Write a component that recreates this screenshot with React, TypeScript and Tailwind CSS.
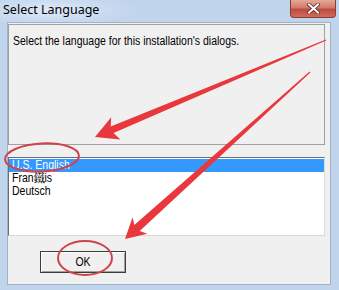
import React from "react";

const ui = "font-['Liberation_Sans',Arial,sans-serif]";

const languages = ["U.S. English", "Fran鐵is", "Deutsch"];

function CloseButton() {
  return (
    <div className="mr-[3px] flex h-[18px] w-[46px] items-center justify-center rounded-b-[4px] border border-t-0 border-[#8a3d34] bg-[linear-gradient(180deg,#e4a898_0%,#d27a6b_45%,#c04a3d_55%,#d26b5c_100%)]">
      <svg width="13" height="11" viewBox="0 0 13 11">
        <path d="M2 1.5 L11 9.5 M11 1.5 L2 9.5" stroke="#5b2a24" strokeWidth="3.6" strokeLinecap="square" />
        <path d="M2 1.5 L11 9.5 M11 1.5 L2 9.5" stroke="#ffffff" strokeWidth="2" strokeLinecap="square" />
      </svg>
    </div>
  );
}

function Annotations() {
  return (
    <svg className="pointer-events-none absolute inset-0" width="339" height="290" viewBox="0 0 339 290">
      <polygon
        fill="#e8383d"
        points="325.8,39.4 326.2,40.6 113.5,133 120.4,139.4 95,137 111.2,117.2 110.7,126.6"
      />
      <polygon
        fill="#e8383d"
        points="309.6,71.6 310.4,72.4 139.7,231.1 147.4,233.7 125,239 132.6,217.3 134.3,225.1"
      />
      <ellipse cx="42" cy="157.5" rx="37" ry="14" fill="none" stroke="#cf4448" strokeWidth="2" transform="rotate(-3 42 157.5)" />
      <ellipse cx="85" cy="258" rx="27" ry="17" fill="none" stroke="#cf4448" strokeWidth="2" />
    </svg>
  );
}

export default function App() {
  return (
    <div className="relative h-[290px] w-[339px] overflow-hidden bg-[#c0d4ec]">
      {/* title bar */}
      <div className="flex h-[22px] items-start justify-between bg-[radial-gradient(ellipse_90px_16px_at_50px_10px,#dfe9f6_0%,#cadcf1_60%,#c0d4ec_100%)]">
        <span className="pl-[3px] pt-[2px] font-['Noto_Sans',sans-serif] text-[12.5px] leading-[16px] text-black">
          Select Language
        </span>
        <CloseButton />
      </div>

      {/* client area */}
      <div className={`ml-[7px] mr-[8px] flex h-[263px] flex-col border border-[#9fb2ca] bg-[#f0f0f0] pr-[5px] text-black ${ui}`}>
        <div className="mt-[1px] h-[121px] whitespace-nowrap border border-[#a0a0a0] pl-[4px] pt-[9px] text-[12.5px] leading-[14px]">
          <span className="inline-block origin-left scale-x-[0.84]">
            Select the language for this installation's dialogs.
          </span>
        </div>

        <div className="mt-[12px] flex h-[79px] flex-col border border-b-[#d8d8d8] border-l-[#6e6e6e] border-r-[#d8d8d8] border-t-[#6e6e6e] bg-white pt-[1px]">
          {languages.map((lang, i) => (
            <div
              key={lang}
              className={`h-[13px] whitespace-nowrap pl-[3px] text-[12.5px] leading-[16px] ${
                i === 0 ? "bg-[#3399ff] text-white" : "text-black"
              }`}
            >
              <span className="inline-block origin-left -translate-y-[2px] scale-x-[0.84]">{lang}</span>
            </div>
          ))}
        </div>

        <button className="ml-[32px] mt-[15px] flex h-[22px] w-[86px] items-center justify-center border border-[#3c3c3c] bg-[#f0f0f0] text-[12.5px] shadow-[inset_1px_1px_0_#ffffff,inset_-1px_-1px_0_#a0a0a0]">
          <span className="inline-block scale-x-[0.84]">OK</span>
        </button>
      </div>

      <Annotations />
    </div>
  );
}
